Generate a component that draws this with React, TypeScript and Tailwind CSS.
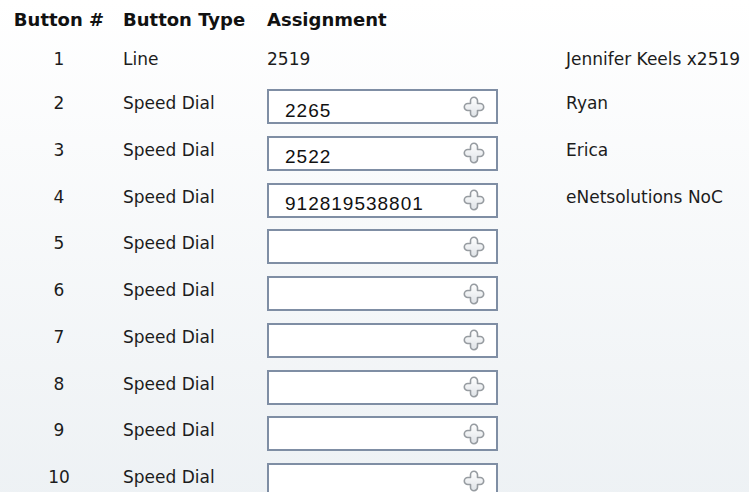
import React from "react";

type Row = {
  num: number;
  type: string;
  value?: string;
  editable: boolean;
  label?: string;
};

const rows: Row[] = [
  { num: 1, type: "Line", value: "2519", editable: false, label: "Jennifer Keels x2519" },
  { num: 2, type: "Speed Dial", value: "2265", editable: true, label: "Ryan" },
  { num: 3, type: "Speed Dial", value: "2522", editable: true, label: "Erica" },
  { num: 4, type: "Speed Dial", value: "912819538801", editable: true, label: "eNetsolutions NoC" },
  { num: 5, type: "Speed Dial", editable: true },
  { num: 6, type: "Speed Dial", editable: true },
  { num: 7, type: "Speed Dial", editable: true },
  { num: 8, type: "Speed Dial", editable: true },
  { num: 9, type: "Speed Dial", editable: true },
  { num: 10, type: "Speed Dial", editable: true },
];

const labelFont = "font-['DejaVu_Sans',sans-serif] text-[17px] leading-[20px]";
const headFont = "font-['DejaVu_Sans',sans-serif] text-[18px] leading-[20px] font-bold text-[#111]";

function PlusIcon({ id }: { id: string }) {
  return (
    <svg width="22" height="22" viewBox="0 0 22 22" aria-hidden="true">
      <defs>
        <linearGradient id={id} x1="0" y1="0" x2="0" y2="1">
          <stop offset="0" stopColor="#ffffff" />
          <stop offset="1" stopColor="#dfe3e7" />
        </linearGradient>
      </defs>
      <path
        d="M7.5 4.8 A3.5 3.5 0 0 1 14.5 4.8 V7.5 H17.2 A3.5 3.5 0 0 1 17.2 14.5 H14.5 V17.2 A3.5 3.5 0 0 1 7.5 17.2 V14.5 H4.8 A3.5 3.5 0 0 1 4.8 7.5 H7.5 Z"
        fill={`url(#${id})`}
        stroke="#979ca1"
        strokeWidth="1.6"
        strokeLinejoin="round"
      />
    </svg>
  );
}

function DialInput({ value, id }: { value?: string; id: string }) {
  return (
    <div className="flex h-[35px] w-[231px] items-center border-2 border-[#7f8ea4] bg-white pl-[16px] pr-[11px]">
      <span className="flex-1 pt-[8px] font-['Liberation_Sans',Arial,sans-serif] text-[19px] leading-[22px] tracking-[1px] text-[#111]">
        {value ?? ""}
      </span>
      <PlusIcon id={id} />
    </div>
  );
}

export default function App() {
  return (
    <div className="min-h-[492px] w-full bg-gradient-to-b from-white to-[#edf1f4] pt-[6px] text-[#1c1c1c]">
      <div className="grid grid-cols-[123px_144px_299px_1fr]">
        {/* header */}
        <div className={`h-[39px] pr-[5px] pt-[4px] text-center ${headFont}`}>Button #</div>
        <div className={`h-[39px] pt-[4px] ${headFont}`}>Button Type</div>
        <div className={`h-[39px] pt-[4px] ${headFont}`}>Assignment</div>
        <div className="h-[39px]" />

        {rows.map((r) => {
          const h = r.editable ? "h-[46.75px]" : "h-[44px]";
          return (
            <React.Fragment key={r.num}>
              <div className={`${h} pr-[5px] pt-[4px] text-center ${labelFont}`}>{r.num}</div>
              <div className={`${h} pt-[4px] ${labelFont}`}>{r.type}</div>
              <div className={h}>
                {r.editable ? (
                  <DialInput value={r.value} id={`plus-${r.num}`} />
                ) : (
                  <div className={`pt-[4px] ${labelFont}`}>{r.value}</div>
                )}
              </div>
              <div className={`${h} pt-[4px] ${labelFont}`}>{r.label ?? ""}</div>
            </React.Fragment>
          );
        })}
      </div>
    </div>
  );
}
